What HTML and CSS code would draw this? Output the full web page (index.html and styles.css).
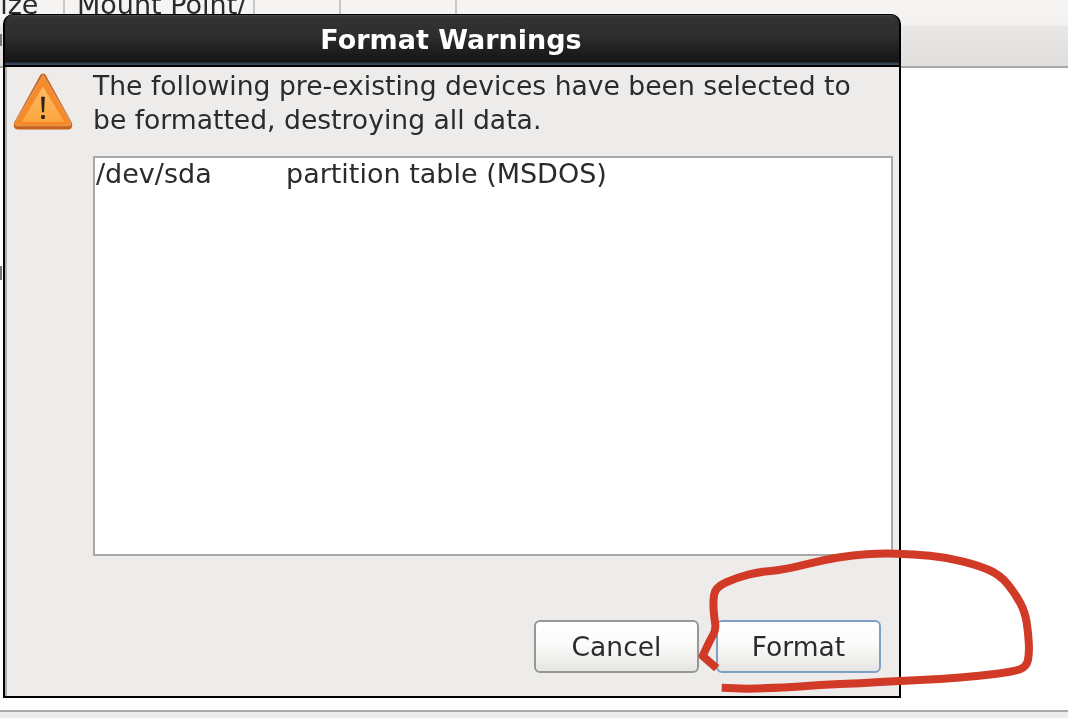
FILE: index.html
```html
<!DOCTYPE html>
<html lang="en">
<head>
<meta charset="utf-8">
<title>Format Warnings</title>
<link rel="stylesheet" href="styles.css">
</head>
<body>
<div class="page">
  <header class="table-head">
    <div class="col col-size"><span class="col-label">Size</span></div>
    <div class="col col-mount"><span class="col-label">Mount Point/</span></div>
    <div class="col col-a"></div>
    <div class="col col-b"></div>
    <div class="col col-rest"></div>
  </header>
  <main class="content"></main>
  <footer class="foot"></footer>
</div>

<span class="edge-mark edge-mark-top"></span>
<span class="edge-mark edge-mark-mid"></span>

<section class="dialog">
  <div class="titlebar"><h1 class="title">Format Warnings</h1></div>
  <div class="dialog-body">
    <div class="message-row">
      <svg class="warn-icon" viewBox="0 0 60 60" aria-hidden="true">
        <defs>
          <linearGradient id="warnFill" x1="0" y1="0" x2="0" y2="1">
            <stop offset="0" stop-color="#fdb964"/>
            <stop offset="1" stop-color="#fca63e"/>
          </linearGradient>
        </defs>
        <path d="M30 2.5 Q32 2.5 33 4.5 L58 50 Q59.5 55.5 55 56.5 L5 56.5 Q0.5 55.5 2 50 L27 4.5 Q28 2.5 30 2.5 Z" fill="#c8631a"/>
        <path d="M30 4 L57 50 Q57.5 53 54.5 53 L5.5 53 Q2.5 53 3 50 Z" fill="#f58a2b" stroke="#e29a60" stroke-width="1"/>
        <path d="M30 15 L50.5 49 L9.5 49 Z" fill="url(#warnFill)"/>
        <path d="M28.2 25 H31.8 L31 40 H29 Z" fill="#2f2418"/>
        <rect x="28.2" y="42.5" width="3.6" height="4" rx="1" fill="#2f2418"/>
      </svg>
      <p class="message">The following pre-existing devices have been selected to be formatted, destroying all data.</p>
    </div>
    <div class="list">
      <div class="list-row"><span class="dev">/dev/sda</span><span class="desc">partition table (MSDOS)</span></div>
    </div>
    <div class="actions">
      <button class="btn" type="button">Cancel</button>
      <button class="btn btn-default" type="button">Format</button>
    </div>
  </div>
</section>

<svg class="scribble" viewBox="0 0 1068 718" aria-hidden="true">
  <path d="M721.7 687.7 L746.7 688.7 Q780 687.7 800 686.4 Q820 685 840 684 Q860 683.3 880 682 Q900 681 920 680 Q940 679 960 677.4 Q980 675.7 996.7 673.7 Q1013.3 671.7 1020 669.2 Q1026.7 666.7 1028 660 Q1029.3 653.3 1028.8 643.3 Q1028.3 633.3 1026.7 622.5 Q1025 611.7 1020 602.5 Q1015 593.3 1007.5 584 Q1000 575 990 570.5 Q980 566 963.3 561.7 Q946.7 557.3 930 555.7 Q913.3 554 896.7 553.7 Q880 553.3 866.7 554.2 Q853.3 555 838.3 557.5 Q823.3 560 810 563.3 Q796.7 566.7 786.7 568.7 Q776.7 570.7 768.3 571.2 Q760 571.7 748.3 574.7 Q736.7 577.7 725.8 582.5 Q715 587.3 714 595.3 Q713 603.3 713.7 610.8 Q714.3 618.3 715.2 624 Q716 630 713 635 Q710 640 702.7 656 L716.7 668.3" fill="none" stroke="#d13a26" stroke-width="8" stroke-linecap="butt" stroke-linejoin="round"/>
</svg>
</body>
</html>
```

FILE: styles.css
```css
* { box-sizing: border-box; }
html, body { margin: 0; height: 100%; overflow: hidden; background: #fff; }
body { font-family: "DejaVu Sans", sans-serif; color: #2b2b2b; }

.page { display: flex; flex-direction: column; height: 718px; filter: blur(0.35px); }

.table-head {
  display: flex;
  height: 68px;
  flex: none;
  overflow: hidden;
  background: linear-gradient(#f6f5f4 0, #f3f2f1 38%, #e9e8e6 40%, #dfdedc 100%);
  border-bottom: 2px solid #a9a8a6;
}
.col { flex: none; border-right: 2px solid #c9c8c6; font-size: 27px; line-height: 28px; padding-left: 12px; }
.col-label { display: block; margin-top: -9px; white-space: nowrap; }
.col-size { width: 65px; padding-left: 0; }
.col-size .col-label { margin-left: -17px; }
.col-mount { width: 190px; }
.col-a { width: 86px; }
.col-b { width: 116px; }
.col-rest { flex: 1; border-right: 0; }

.content { flex: 1; background: #fff; }
.foot { flex: none; height: 8px; background: #edeceb; border-top: 2px solid #a9a8a6; }

.edge-mark { position: absolute; left: 0; width: 2px; background: #777; }
.edge-mark-top { top: 34px; height: 12px; }
.edge-mark-mid { top: 266px; height: 14px; }

.dialog {
  position: absolute;
  left: 3px;
  top: 14px;
  width: 898px;
  height: 684px;
  display: flex;
  flex-direction: column;
  background: #000;
  border: 2px solid #000;
  border-top-width: 1px;
  border-radius: 10px 10px 0 0;
  filter: blur(0.35px);
}
.titlebar {
  flex: none;
  height: 50px;
  display: flex;
  align-items: center;
  justify-content: center;
  padding-right: 2px;
  padding-bottom: 1px;
  background: linear-gradient(#4a4a4a 0, #333 4%, #2e2e2e 40%, #141414 94%, #2f3f52 96%, #3c5068 100%);
  border-radius: 8px 8px 0 0;
}
.title { margin: 0; font-size: 27px; line-height: 1; font-weight: 700; color: #fff; }

.dialog-body {
  flex: 1;
  margin-top: 2px;
  display: flex;
  flex-direction: column;
  min-height: 0;
  background: #edeceb;
  border-left: 2px solid #b4b3b1;
  padding: 2px 6px 23px 6px;
}
.message-row { flex: none; display: flex; align-items: flex-start; gap: 19px; height: 87px; }
.warn-icon { flex: none; width: 62px; height: 62px; margin-top: 2px; margin-left: -1px; }
.message { margin: 0; width: 770px; font-size: 26.6px; line-height: 34px; }

.list {
  flex: none;
  height: 400px;
  margin-left: 80px;
  background: #fff;
  border: 2px solid #a9a8a6;
  font-size: 27px;
  line-height: 32px;
}
.list-row { display: flex; padding-left: 1px; }
.dev { width: 190px; flex: none; }

.actions { margin-top: auto; display: flex; justify-content: flex-end; gap: 17px; padding-right: 12px; }
.btn {
  width: 165px;
  height: 53px;
  padding: 0;
  font: 26.5px "DejaVu Sans", sans-serif;
  color: #2b2b2b;
  background: linear-gradient(#ffffff 0, #fbfbfa 45%, #e6e5e3 100%);
  border: 2px solid #989795;
  border-radius: 6px;
}
.btn-default { border-color: #7f9fc6; }

.scribble { position: absolute; left: 0; top: 0; width: 1068px; height: 718px; pointer-events: none; }
```
